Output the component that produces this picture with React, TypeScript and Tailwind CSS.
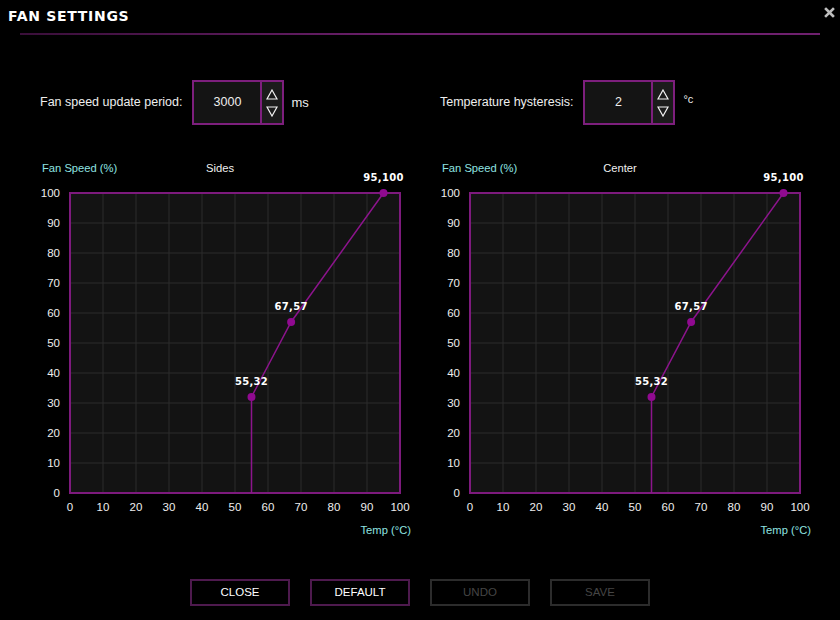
import React from "react";

const SANS = "font-['Liberation_Sans',Arial,sans-serif]";

// plot geometry inside each chart svg
const X0 = 40;
const X1 = 370;
const Y0 = 338;
const Y1 = 38;
const px = (t: number) => X0 + (t / 100) * (X1 - X0);
const py = (s: number) => Y0 - (s / 100) * (Y0 - Y1);

const points: [number, number][] = [
  [55, 32],
  [67, 57],
  [95, 100],
];

const ticks = [0, 10, 20, 30, 40, 50, 60, 70, 80, 90, 100];

function FanChart({ title }: { title: string }) {
  const path =
    `M ${px(55)} ${py(0)} L ${px(55)} ${py(32)} ` +
    points
      .slice(1)
      .map(([t, s]) => `L ${px(t)} ${py(s)}`)
      .join(" ");

  return (
    <svg width={390} height={390} className="shrink-0" fontFamily="'Liberation Sans', Arial, sans-serif">
      <text x={12} y={17} fontSize={11.2} fill="#8fe3e0">
        Fan Speed (%)
      </text>
      <text x={190} y={17} fontSize={11.2} fill="#f0f0f0" textAnchor="middle">
        {title}
      </text>

      {/* plot area */}
      <rect x={X0} y={Y1} width={X1 - X0} height={Y0 - Y1} fill="#131313" />
      {ticks.slice(1, -1).map((v) => (
        <g key={v}>
          <line x1={px(v)} x2={px(v)} y1={Y1} y2={Y0} stroke="#2c2c2c" strokeWidth={1} />
          <line x1={X0} x2={X1} y1={py(v)} y2={py(v)} stroke="#2c2c2c" strokeWidth={1} />
        </g>
      ))}
      <rect
        x={X0}
        y={Y1}
        width={X1 - X0}
        height={Y0 - Y1}
        fill="none"
        stroke="#7d1a7d"
        strokeWidth={2}
      />

      {/* y axis labels */}
      {ticks.map((v) => (
        <text key={`y${v}`} x={30} y={py(v) + 4} fontSize={11.5} fill="#eeeeee" textAnchor="end">
          {v}
        </text>
      ))}
      {/* x axis labels */}
      {ticks.map((v) => (
        <text key={`x${v}`} x={px(v)} y={356} fontSize={11.5} fill="#eeeeee" textAnchor="middle">
          {v}
        </text>
      ))}
      <text x={381} y={379} fontSize={11.2} fill="#8fe3e0" textAnchor="end">
        Temp (°C)
      </text>

      {/* curve */}
      <path d={path} fill="none" stroke="#8c148c" strokeWidth={1.5} />
      {points.map(([t, s]) => (
        <g key={`${t}`}>
          <circle cx={px(t)} cy={py(s)} r={4} fill="#900a90" />
          <text
            x={px(t)}
            y={py(s) - 12}
            fontSize={10}
            fontWeight={700}
            fill="#ffffff"
            textAnchor="middle"
            fontFamily="'DejaVu Sans', sans-serif"
            letterSpacing={0.3}
          >
            {t},{s}
          </text>
        </g>
      ))}
    </svg>
  );
}

function Spinner({ value }: { value: string }) {
  return (
    <div className="flex h-[45px] w-[92px] border-2 border-[#7d1f7d] bg-[#141414]">
      <div className="flex flex-1 items-center justify-center text-[12.5px] text-[#eeeeee]">{value}</div>
      <div className="flex w-[22px] flex-col items-center justify-center gap-[6px] border-l-2 border-[#7d1f7d] bg-[#1b1b1b]">
        <svg width={12} height={11} viewBox="0 0 12 11">
          <polygon points="6,1 11,10 1,10" fill="none" stroke="#f2f2f2" strokeWidth={1.2} />
        </svg>
        <svg width={12} height={11} viewBox="0 0 12 11">
          <polygon points="1,1 11,1 6,10" fill="none" stroke="#f2f2f2" strokeWidth={1.2} />
        </svg>
      </div>
    </div>
  );
}

function Button({ label, enabled }: { label: string; enabled: boolean }) {
  return (
    <button
      className={
        enabled
          ? "h-[27px] w-[100px] border-2 border-[#4e1a4e] bg-black text-[11.5px] text-white"
          : "h-[27px] w-[100px] border-2 border-[#2c2c2c] bg-black text-[11.5px] text-[#454545]"
      }
    >
      {label}
    </button>
  );
}

export default function App() {
  return (
    <div className={`flex h-[620px] w-[840px] flex-col overflow-hidden bg-black ${SANS}`}>
      {/* header */}
      <div className="flex h-[33px] items-center justify-between pl-2 pr-[5px]">
        <span className="font-['DejaVu_Sans',sans-serif] text-[14px] font-bold tracking-[0.7px] text-white">
          FAN SETTINGS
        </span>
        <svg width={11} height={11} viewBox="0 0 11 11" className="mb-[8px]">
          <path d="M2 2 L9 9 M9 2 L2 9" stroke="#bdbdbd" strokeWidth={2.6} strokeLinecap="square" />
        </svg>
      </div>
      <div className="mx-5 h-[2px] bg-gradient-to-r from-[#3a0f3a] via-[#6e206e] to-[#6e206e]" />

      {/* update settings */}
      <div className="mt-[45px] flex">
        <div className="flex w-[400px] items-center pl-10 text-[12.5px] text-[#eeeeee]">
          <span>Fan speed update period:</span>
          <div className="ml-[10px]">
            <Spinner value="3000" />
          </div>
          <span className="ml-[7px] text-[13px]">ms</span>
        </div>
        <div className="flex w-[400px] items-center pl-10 text-[12.5px] text-[#eeeeee]">
          <span>Temperature hysteresis:</span>
          <div className="ml-[10px]">
            <Spinner value="2" />
          </div>
          <span className="ml-[8px] mb-[6px] text-[11px]">°c</span>
        </div>
      </div>

      {/* charts */}
      <div className="mt-[30px] flex gap-[10px] pl-[30px]">
        <FanChart title="Sides" />
        <FanChart title="Center" />
      </div>

      {/* buttons */}
      <div className="mt-[34px] flex justify-center gap-5">
        <Button label="CLOSE" enabled />
        <Button label="DEFAULT" enabled />
        <Button label="UNDO" enabled={false} />
        <Button label="SAVE" enabled={false} />
      </div>
    </div>
  );
}
